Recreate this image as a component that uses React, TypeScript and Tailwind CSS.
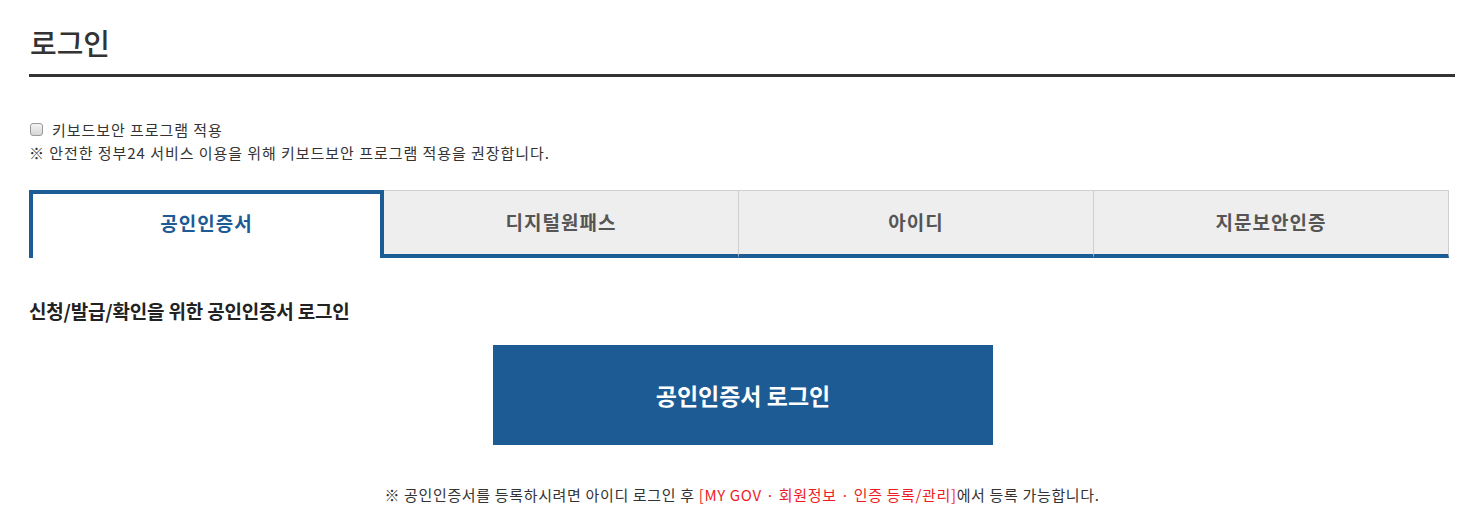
import React from "react";

const tabs = ["공인인증서", "디지털원패스", "아이디", "지문보안인증"];

const App = () => {
  return (
    <div className="h-[528px] w-[1472px] overflow-hidden bg-white font-['Noto_Sans_CJK_KR','Noto_Sans',sans-serif] text-[#333]">
      <div className="ml-[29px] w-[1426px]">
        <h1 className="pl-[1px] pt-[22px] text-[29px] font-medium leading-[40px] text-[#333]">
          로그인
        </h1>
        <div className="mt-[12px] h-[3px] bg-[#333]" />

        <div className="mt-[41px] text-[15px] leading-[23px] tracking-[0.95px]">
          <label className="flex items-center">
            <span className="ml-[1px] mr-[9px] inline-block h-[13px] w-[13px] rounded-[3px] border border-[#9a9a9a] bg-gradient-to-b from-[#f4f4f4] to-[#d6d6d6]" />
            키보드보안 프로그램 적용
          </label>
          <p>※ 안전한 정부24 서비스 이용을 위해 키보드보안 프로그램 적용을 권장합니다.</p>
        </div>

        <div className="mt-[26px] grid h-[68px] w-[1420px] grid-cols-4">
          {tabs.map((tab, i) =>
            i === 0 ? (
              <div
                key={tab}
                className="flex items-center justify-center border-[4px] border-b-0 border-[#1d5b94] bg-white pb-[6px] text-[19px] font-bold tracking-[1px] text-[#1d5b94]"
              >
                {tab}
              </div>
            ) : (
              <div
                key={tab}
                className="flex items-center justify-center border-r border-t border-b-[4px] border-[#cfcfcf] border-b-[#1d5b94] bg-[#eeeeee] text-[19px] font-bold tracking-[1px] text-[#555]"
              >
                {tab}
              </div>
            )
          )}
        </div>

        <h2 className="mt-[40px] text-[19px] font-bold leading-[26px] tracking-[-0.01em] text-[#222]">
          신청/발급/확인을 위한 공인인증서 로그인
        </h2>

        <button className="ml-[464px] mt-[21px] flex h-[100px] w-[500px] items-center justify-center bg-[#1d5b94] text-[23px] font-bold text-white">
          공인인증서 로그인
        </button>

        <p className="mt-[39px] text-center text-[15px] leading-[22px] tracking-[0.65px] text-[#333]">
          ※ 공인인증서를 등록하시려면 아이디 로그인 후{" "}
          <span className="text-[#ee1c25]">[MY GOV · 회원정보 · 인증 등록/관리]</span>
          에서 등록 가능합니다.
        </p>
      </div>
    </div>
  );
};

export default App;
